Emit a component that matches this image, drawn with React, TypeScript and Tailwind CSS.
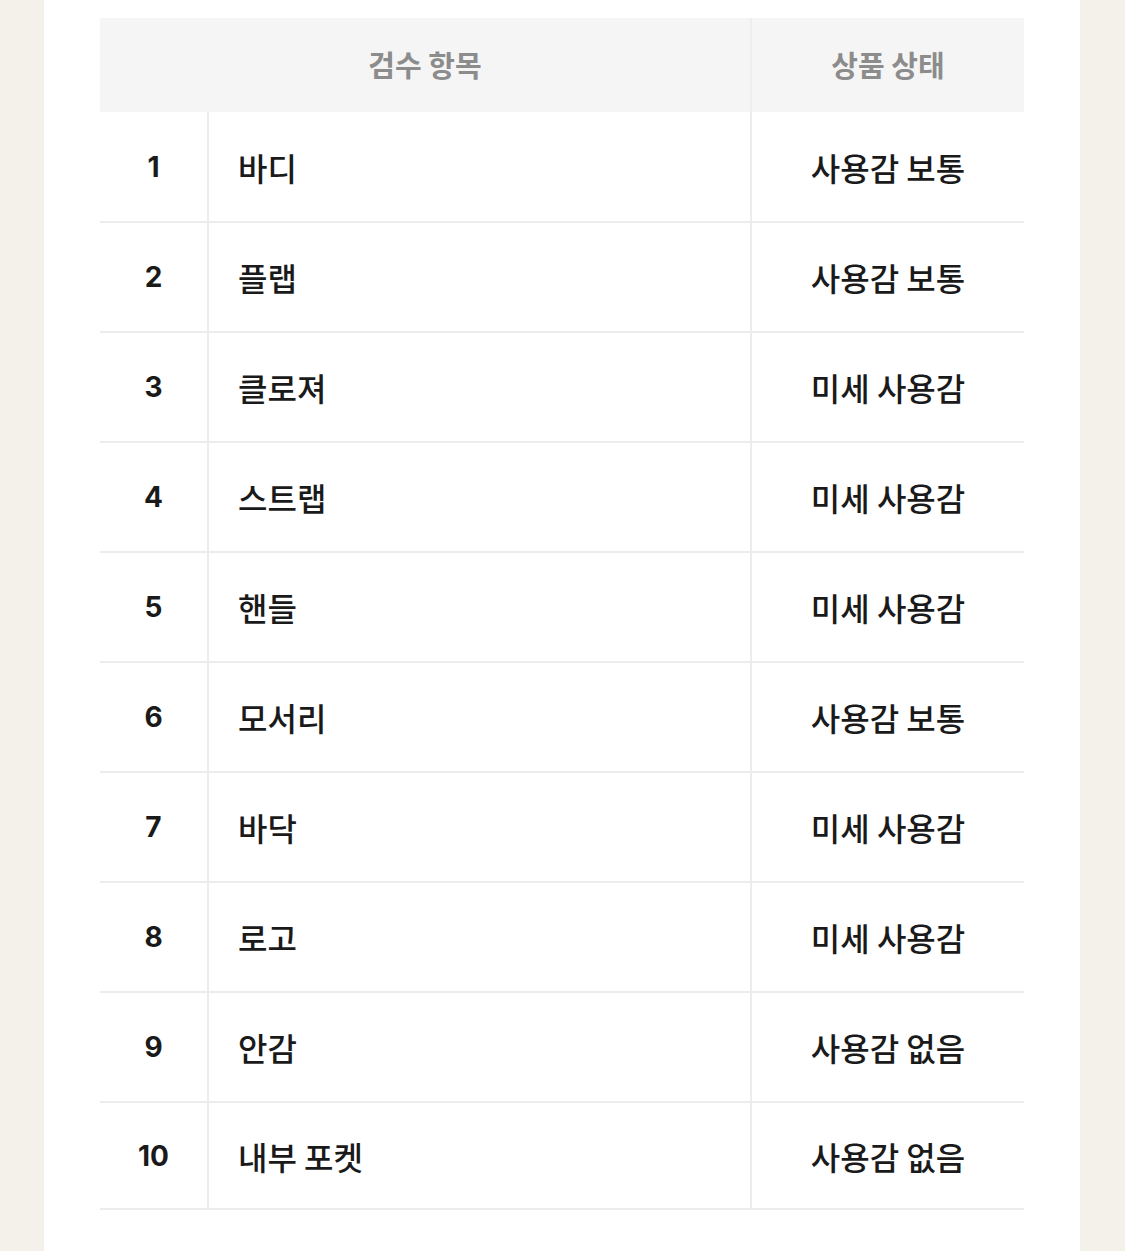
import React from "react";

const rows: [string, string, string][] = [
  ["1", "바디", "사용감 보통"],
  ["2", "플랩", "사용감 보통"],
  ["3", "클로져", "미세 사용감"],
  ["4", "스트랩", "미세 사용감"],
  ["5", "핸들", "미세 사용감"],
  ["6", "모서리", "사용감 보통"],
  ["7", "바닥", "미세 사용감"],
  ["8", "로고", "미세 사용감"],
  ["9", "안감", "사용감 없음"],
  ["10", "내부 포켓", "사용감 없음"],
];

export default function App() {
  return (
    <div
      className="min-h-[1251px] w-full bg-[#f3f1ea] flex justify-center"
      style={{ fontFamily: '"Noto Sans CJK KR", "Noto Sans", sans-serif' }}
    >
      <div className="w-[1036px] ml-[-1px] bg-white px-[56px] pt-[18px] min-h-[1251px]">
        <div className="w-[924px]">
          <div className="flex h-[94px] bg-[#f5f5f5]">
            <div className="w-[652px] border-r-2 border-[#eeeeee] flex items-center justify-center text-[29px] font-bold text-[#8c8c8c]">
              검수 항목
            </div>
            <div className="flex-1 flex items-center justify-center text-[29px] font-bold text-[#8c8c8c]">
              상품 상태
            </div>
          </div>
          {rows.map(([n, item, status], i) => (
            <div
              key={n}
              className={`flex border-b-2 border-[#ececec] ${i === 0 ? "h-[111px]" : i === rows.length - 1 ? "h-[107px]" : "h-[110px]"}`}
            >
              <div
                className="w-[109px] border-r-2 border-[#ececec] flex items-center justify-center text-[28px] font-bold text-[#1a1a1a]"
                style={{ fontFamily: 'Inter, "Liberation Sans", sans-serif' }}
              >
                {n}
              </div>
              <div className="w-[543px] border-r-2 border-[#ececec] flex items-center pl-[29px] text-[32px] font-medium text-[#1a1a1a]">
                {item}
              </div>
              <div className="flex-1 flex items-center justify-center text-[32px] font-medium text-[#1a1a1a]">
                {status}
              </div>
            </div>
          ))}
        </div>
      </div>
    </div>
  );
}
